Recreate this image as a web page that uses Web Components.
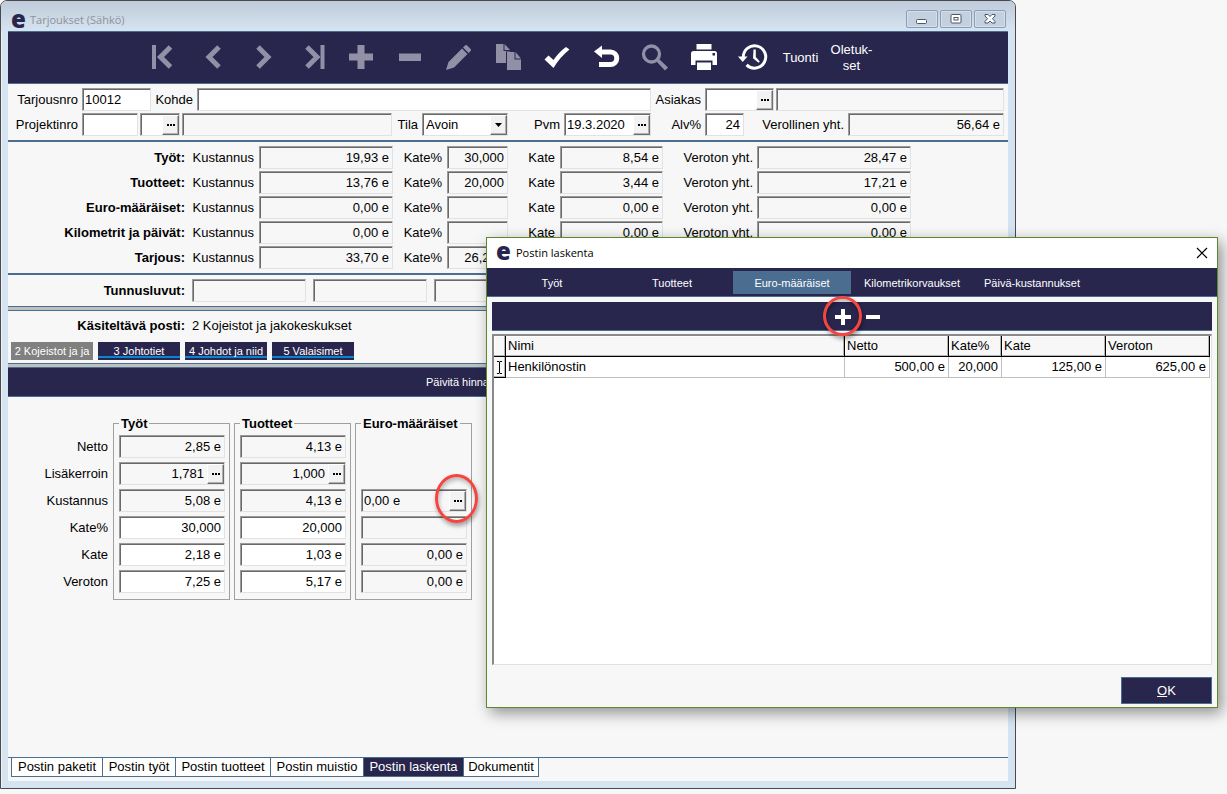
<!DOCTYPE html>
<html lang="fi">
<head>
<meta charset="utf-8">
<meta name="viewport" content="width=device-width, initial-scale=1">
<title>Tarjoukset (Sähkö)</title>
<style>
  :root {
    --navy: #28264d;
    --line: #4a6d90;
    --face: #f7f7f7;
    --frame: #d6e4f2;
  }
  html, body { margin: 0; min-height: 100%; }
  body {
    position: relative;
    background: var(--face);
    color: #000;
    font: 13px/16px "Liberation Sans", Arial, sans-serif;
  }
  offer-window { width: calc(100% - 211px); min-height: calc(100vh - 5px); }
  item-dialog { position: absolute; z-index: 10; left: 486px; right: 9px; top: 237px; }
</style>
</head>
<body>
<offer-window></offer-window>
<item-dialog></item-dialog>

<script>
const RESET = `
  :host, *, *::before, *::after { box-sizing: border-box; }
  button, input, select { font: inherit; color: inherit; margin: 0; border-radius: 0; }
  button { padding: 0; border: 0; background: none; }
  svg { display: block; }
`;

class View extends HTMLElement {
  constructor() {
    super();
    this.attachShadow({ mode: 'open', delegatesFocus: this.constructor.delegates === true });
  }
  connectedCallback() {
    if (!this.shadowRoot.firstChild) {
      this.shadowRoot.innerHTML = `<style>${RESET}${this.css()}</style>${this.html()}`;
    }
  }
  css() { return ''; }
  html() { return '<slot></slot>'; }
  attr(name) { return this.getAttribute(name) || ''; }
}

/* Sunken box, optionally with a caption and a lookup button */
class ValueField extends View {
  static delegates = true;
  static formAssociated = true;
  css() {
    return `
      :host { display: flex; height: 23px; min-width: 0; }
      label { flex: none; width: var(--lw, 0); padding-right: var(--lp, 4px); text-align: right; line-height: 24px; white-space: nowrap; }
      .box {
        flex: 1; min-width: 0; display: flex; background: var(--face);
        border: 1px solid; border-color: #9a9a9a #e2e2e2 #e2e2e2 #9a9a9a;
        box-shadow: inset 1px 1px 0 #696969;
      }
      :host([edit]) .box { background: #fff; }
      input {
        flex: 1; width: 0; min-width: 0; height: 20px; border: 0; background: none; outline: 0;
        padding: 0 3px 0 2px; text-align: right;
      }
      :host([start]) input { text-align: left; }
      button {
        flex: none; width: 17px; margin-top: 1px; background: #f2f2f2;
        border: 1px solid; border-color: #fff #6d6d6d #6d6d6d #fff;
        box-shadow: inset -1px -1px 0 #b0b0b0;
        display: grid; place-items: center;
      }
    `;
  }
  html() {
    const label = this.attr('label');
    const name = label || this.attr('name');
    return `
      ${label ? `<label for="v">${label}</label>` : ''}
      <div class="box">
        <input id="v" type="text" value="${this.attr('value')}" ${label ? '' : `aria-label="${name}"`} ${this.hasAttribute('edit') ? '' : 'readonly'}>
        ${this.hasAttribute('lookup') ? `<button type="button" aria-label="Valitse ${name}">
          <svg width="8" height="2" viewBox="0 0 8 2"><path d="M0 0h2v2H0zM3 0h2v2H3zM6 0h2v2H6z"/></svg></button>` : ''}
      </div>`;
  }
}
customElements.define('value-field', ValueField);

class ChoiceField extends View {
  static delegates = true;
  css() {
    return `
      :host { display: flex; height: 23px; }
      label { flex: none; width: var(--lw, 0); padding-right: 4px; text-align: right; line-height: 24px; }
      .box {
        position: relative; flex: 1; min-width: 0; display: flex; background: #fff;
        border: 1px solid; border-color: #9a9a9a #e2e2e2 #e2e2e2 #9a9a9a;
        box-shadow: inset 1px 1px 0 #696969;
      }
      select { appearance: none; flex: 1; width: 0; border: 0; padding: 0 18px 0 3px; background: none; outline: 0; }
      .arrow {
        position: absolute; right: 0; top: 1px; bottom: 0; width: 17px; background: #f2f2f2; pointer-events: none;
        border: 1px solid; border-color: #fff #6d6d6d #6d6d6d #fff; box-shadow: inset -1px -1px 0 #b0b0b0;
        display: grid; place-items: center;
      }
    `;
  }
  html() {
    return `<label for="s">${this.attr('label')}</label>
      <div class="box"><select id="s"><option>${this.attr('value')}</option></select>
      <span class="arrow"><svg width="7" height="4" viewBox="0 0 7 4"><path d="M0 0h7L3.5 4z"/></svg></span></div>`;
  }
}
customElements.define('choice-field', ChoiceField);

/* Company mark in the title bars */
class AppMark extends View {
  css() {
    return `:host { display: block; width: 14px; font: 800 24px/20px "Open Sans", sans-serif; color: var(--navy); }
      span { display: block; }`;
  }
  html() { return '<span aria-hidden="true">e</span>'; }
}
customElements.define('app-mark', AppMark);

/* Hand-drawn style highlight around a control */
class HighlightRing extends View {
  css() {
    return `:host { display: block; position: absolute; z-index: 1; pointer-events: none; border: 3px solid #f4463f; border-radius: 50%;
      box-shadow: 1px 3px 4px rgba(0,0,0,.35), inset 1px 3px 4px rgba(0,0,0,.25); }`;
  }
}
customElements.define('highlight-ring', HighlightRing);

const ICONS = [
  ['Ensimmäinen', 1, '<path d="M13 13h4v24h-4z"/><path class="s" d="M31.500 15 21.500 25l10 10"/>'],
  ['Edellinen', 1, '<path class="s" d="M31 15 21 25l10 10"/>'],
  ['Seuraava', 1, '<path class="s" d="M21 15l10 10-10 10"/>'],
  ['Viimeinen', 1, '<path d="M34.500 13h4v24h-4z"/><path class="s" d="M21 15l10 10-10 10"/>'],
  ['Lisää', 1, '<path d="M22.500 13h7v8.500H38v7h-8.500V37h-7v-8.500H14v-7h8.500z"/>'],
  ['Poista', 1, '<path d="M15 21.500h22v7.500H15z"/>'],
  ['Muokkaa', 1, '<path d="M13 38l2.500-8L29 16.500l5.500 5.500L21 35.500zM30 15.500l2-2q1-1 2.200 0l3.400 3.400q1 1.100 0 2.100l-2 2z"/>'],
  ['Kopioi', 1, '<path d="M14 12h7.500v7H28v.5h-4V31H14zM22.500 12l5.500 6h-5.500z"/><path d="M25 20h7.500v7.500H39V38H25zM33.500 20l5.500 6.500h-5.500z"/>'],
  ['Hyväksy', 0, '<path d="M13.500 27.500l4-4 5 4.500Q28 20 35 15l3.500 2.500Q29 25 22.500 36z"/>'],
  ['Peru', 0, '<path d="M14 19.500l8-6v4h8.500a8.500 8.500 0 0 1 0 17.500H19v-5h11.500a3.700 3.700 0 0 0 0-7.500H22V26z"/>'],
  ['Hae', 1, '<circle cx="22.500" cy="22" r="8" fill="none" stroke="currentColor" stroke-width="3.300"/><path d="M27.500 29.500l2.500-2.500 9 8.500-3 3z"/>'],
  ['Tulosta', 0, '<path d="M18.500 12h15v5.500h-15z"/><path fill-rule="evenodd" d="M15.500 19h21q2.500 0 2.500 2.500V33h-4.500v-4.500h-17V33H13V21.500Q13 19 15.500 19zm19 2v2.500H37V21z"/><path d="M19 30.500h14V38H19z"/>'],
  ['Historia', 0, '<path d="M16.300 25a11.200 11.200 0 1 1 3.300 7.900" fill="none" stroke="currentColor" stroke-width="3"/><path d="M11 24.500h9.500L15.700 30z"/><path d="M26.500 17.500h2.300v7.500l4 4.500-1.300 1.200-5.500-4.500z"/>'],
];

class MainToolbar extends View {
  css() {
    return `
      :host { display: flex; height: 53px; padding-left: 131px; background: var(--navy); color: #fff;
        border: solid var(--line); border-width: 1px 0; }
      button { width: 49px; height: 51px; }
      button.dim { color: #9190a6; }
      svg { fill: currentColor; }
      .s { fill: none; stroke: currentColor; stroke-width: 5; }
      .two { padding-left: 4px; }
    `;
  }
  html() {
    return ICONS.map(([name, dim, art]) =>
      `<button type="button" class="${dim ? 'dim' : ''}" aria-label="${name}"><svg width="49" height="51" viewBox="0 0 49 51">${art}</svg></button>`
    ).join('') + '<button type="button">Tuonti</button><button type="button" class="two">Oletuk-<br>set</button>';
  }
}
customElements.define('main-toolbar', MainToolbar);

class OfferHeader extends View {
  css() {
    return `
      :host { display: flex; flex-direction: column; gap: 2px; padding: 4px 4px 4px 0; border-bottom: 2px solid var(--line); }
      .row { display: flex; }
      .gap { margin-left: 2px; }
      .grow { flex: 1; }
      .no { --lw: 74px; width: 143px; }
      .project { --lw: 74px; width: 130px; }
      .target { --lw: 46px; }
      .client { --lw: 54px; width: 123px; }
      .clientname { width: 228px; }
      .code { width: 40px; }
      .state { --lw: 30px; width: 116px; }
      .date { --lw: 56px; width: 143px; }
      .vat { --lw: 54px; width: 93px; }
      .total { --lw: 104px; width: 260px; }
    `;
  }
  html() {
    return `
      <div class="row">
        <value-field class="no" label="Tarjousnro" value="10012" edit start></value-field>
        <value-field class="target grow" label="Kohde" edit start></value-field>
        <value-field class="client" label="Asiakas" edit start lookup></value-field>
        <value-field class="clientname gap" name="Asiakkaan nimi" start></value-field>
      </div>
      <div class="row">
        <value-field class="project" label="Projektinro" edit start></value-field>
        <value-field class="code gap" name="Projekti" edit start lookup></value-field>
        <value-field class="grow gap" name="Projektin nimi" start></value-field>
        <choice-field class="state" label="Tila" value="Avoin"></choice-field>
        <value-field class="date" label="Pvm" value="19.3.2020" edit start lookup></value-field>
        <value-field class="vat" label="Alv%" value="24" edit></value-field>
        <value-field class="total" label="Verollinen yht." value="56,64 e"></value-field>
      </div>`;
  }
}
customElements.define('offer-header', OfferHeader);

class OfferTotals extends View {
  css() {
    return `
      :host { --lp: 5px; display: flex; flex-direction: column; gap: 2px; padding: 4px 0; border-bottom: 2px solid var(--line); }
      .row { display: flex; height: 23px; }
      b { width: 177px; text-align: right; line-height: 24px; }
      .cost { --lw: 74px; width: 208px; }
      .pct { --lw: 54px; width: 115px; }
      .margin { --lw: 52px; width: 155px; }
      .net { --lw: 94px; --lp: 4px; width: 248px; }
    `;
  }
  html() {
    return [
      ['Työt:', '19,93 e', '30,000', '8,54 e', '28,47 e'],
      ['Tuotteet:', '13,76 e', '20,000', '3,44 e', '17,21 e'],
      ['Euro-määräiset:', '0,00 e', '', '0,00 e', '0,00 e'],
      ['Kilometrit ja päivät:', '0,00 e', '', '0,00 e', '0,00 e'],
      ['Tarjous:', '33,70 e', '26,233'],
    ].map(([t, a, b, c, d]) => `
      <div class="row" role="group" aria-label="${t}"><b>${t}</b>
        <value-field class="cost" label="Kustannus" value="${a}"></value-field>
        <value-field class="pct" label="Kate%" value="${b}"></value-field>
        ${c ? `<value-field class="margin" label="Kate" value="${c}"></value-field>
        <value-field class="net" label="Veroton yht." value="${d}"></value-field>` : ''}
      </div>`).join('');
  }
}
customElements.define('offer-totals', OfferTotals);

class KeyFigures extends View {
  css() {
    return `
      :host { display: flex; gap: 7px; padding: 4px 0; height: 31px; }
      b { width: 177px; text-align: right; line-height: 24px; }
      value-field { width: 114px; }
    `;
  }
  html() {
    return '<b>Tunnusluvut:</b>' + [1, 2, 3].map(n => `<value-field name="Tunnusluku ${n}"></value-field>`).join('');
  }
}
customElements.define('key-figures', KeyFigures);

class PanelSplitter extends View {
  css() {
    return ':host { display: block; height: 5px; background: #c0c0c0; border: solid var(--line); border-width: 1px 0; }';
  }
}
customElements.define('panel-splitter', PanelSplitter);

class PostPicker extends View {
  css() {
    return `
      :host { display: block; padding: 7px 3px 3px; }
      p { display: flex; gap: 7px; margin: 0 0 8px; }
      b { width: 174px; text-align: right; }
      div { display: flex; gap: 5px; }
      button { width: 82px; height: 18px; color: #fff; background: var(--navy); font-size: 11px; line-height: 18px; white-space: nowrap;
        background-image: linear-gradient(#0a84d0, #0a84d0); background-size: 100% 2px; background-position: 0 14px; background-repeat: no-repeat; }
      .on { background: #808080; }
    `;
  }
  html() {
    return `<p><b>Käsiteltävä posti:</b><span>2 Kojeistot ja jakokeskukset</span></p>
      <div><button type="button" class="on">2 Kojeistot ja ja</button><button type="button">3 Johtotiet</button><button type="button">4 Johdot ja niid</button><button type="button">5 Valaisimet</button></div>`;
  }
}
customElements.define('post-picker', PostPicker);

class ActionBar extends View {
  css() {
    return `
      :host { display: flex; height: 29px; padding-left: 418px; background: var(--navy); border-bottom: 1px solid var(--line); }
      button { color: #fff; font-size: 11px; }
    `;
  }
  html() { return '<button type="button">Päivitä hinnat</button>'; }
}
customElements.define('action-bar', ActionBar);

class PostCalculation extends View {
  css() {
    return `
      :host { display: flex; flex: 1; align-items: flex-start; gap: 4px; padding-top: 19px; }
      .labels { width: 101px; padding: 19px 1px 0 0; display: grid; gap: 4px; text-align: right; }
      .labels label { height: 23px; line-height: 24px; }
      fieldset { width: 117px; min-width: 0; margin: 0; padding: 4px 4px 6px 5px; border: 1px solid #a0a0a0; }
      legend { padding: 0 2px; line-height: 15px; font-weight: bold; white-space: nowrap; }
      .cells { display: grid; gap: 4px; }
      .cell { position: relative; height: 23px; }
      highlight-ring { width: 43px; height: 49px; right: -11px; top: -15px; }
    `;
  }
  html() {
    const rows = ['Netto', 'Lisäkerroin', 'Kustannus', 'Kate%', 'Kate', 'Veroton'];
    const groups = [
      ['Työt', ['2,85 e', '1,781', '5,08 e', '30,000', '2,18 e', '7,25 e'], ['', 'lookup', '', 'edit', 'edit', 'edit']],
      ['Tuotteet', ['4,13 e', '1,000', '4,13 e', '20,000', '1,03 e', '5,17 e'], ['', 'lookup', '', 'edit', 'edit', 'edit']],
      ['Euro-määräiset', [null, null, '0,00 e', '', '0,00 e', '0,00 e'], ['', '', 'lookup start', '', '', '']],
    ];
    return `<div class="labels">${rows.map((r, i) => `<label for="c0${i}">${r}</label>`).join('')}</div>` +
      groups.map(([title, values, flags], g) => `<fieldset><legend>${title}</legend><div class="cells">${
        values.map((v, i) => `<div class="cell">${v === null ? '' : `<value-field id="c${g}${i}" name="${title} ${rows[i]}" value="${v}" ${flags[i]}></value-field>`}${
          g === 2 && i === 2 ? '<highlight-ring></highlight-ring>' : ''}</div>`).join('')
      }</div></fieldset>`).join('');
  }
}
customElements.define('post-calculation', PostCalculation);

class PageTabs extends View {
  css() {
    return `
      :host { display: flex; height: 24px; padding: 0 3px 4px; border-top: 1px solid var(--line); }
      button { height: 19px; width: var(--w); background: #fff; border: solid var(--line); border-width: 0 0 1px 1px; white-space: nowrap; }
      button:last-child { border-right-width: 1px; }
      .on { background: var(--navy); color: #fff; }
    `;
  }
  html() {
    return [['Postin paketit', 91], ['Postin työt', 73], ['Postin tuotteet', 95], ['Postin muistio', 93], ['Postin laskenta', 100], ['Dokumentit', 76]]
      .map(([t, w]) => `<button type="button" style="--w:${w}px" class="${t === 'Postin laskenta' ? 'on' : ''}">${t}</button>`).join('');
  }
}
customElements.define('page-tabs', PageTabs);

class OfferWindow extends View {
  css() {
    return `
      :host { display: flex; flex-direction: column; border: 1px solid #4a4a4c; border-radius: 7px 7px 0 0; background: var(--frame);
        box-shadow: inset 1px 1px 0 #eef4fa; }
      header { display: flex; align-items: center; height: 30px; padding: 5px 9px 0 10px; gap: 5px; border-radius: 6px 6px 0 0;
        background: linear-gradient(#bfcbda, #d6e3f0); color: #8d9299; }
      h1 { flex: 1; margin: 0; padding-top: 2px; font: 11px/16px "Open Sans", sans-serif; }
      .ctl { display: flex; gap: 2px; }
      .ctl button { width: 32px; height: 18px; border: 1px solid #8d9cb4; border-radius: 2px; box-shadow: inset 0 0 0 1px #d5e0ec; background: #c3d0df; display: grid; place-items: center; }
      main { flex: 1; display: flex; flex-direction: column; margin: 0 7px 7px; background: var(--face); }
      svg { fill: #fff; stroke: #4d5666; }
    `;
  }
  html() {
    return `
      <header><app-mark></app-mark><h1>Tarjoukset (Sähkö)</h1>
        <div class="ctl">
          <button type="button" aria-label="Pienennä"><svg width="12" height="10" viewBox="0 0 12 10"><rect x=".5" y="5.500" width="10" height="4" rx="1"/></svg></button>
          <button type="button" aria-label="Suurenna"><svg width="12" height="10" viewBox="0 0 12 10"><rect x="1" y=".5" width="10" height="8.500" rx="1"/><rect x="4" y="3.500" width="4" height="2.500"/></svg></button>
          <button type="button" aria-label="Sulje"><svg width="12" height="10" viewBox="0 0 12 10"><path d="M1 .5h3l2 2 2-2h3v1.500L8.500 4.700 11 7.500V9H8L6 7 4 9H1V7.500l2.500-2.800L1 2z"/></svg></button>
        </div>
      </header>
      <main>
        <main-toolbar></main-toolbar>
        <offer-header></offer-header>
        <offer-totals></offer-totals>
        <key-figures></key-figures>
        <panel-splitter></panel-splitter>
        <post-picker></post-picker>
        <panel-splitter></panel-splitter>
        <action-bar></action-bar>
        <post-calculation></post-calculation>
        <page-tabs></page-tabs>
      </main>`;
  }
}
customElements.define('offer-window', OfferWindow);

class ItemTable extends View {
  css() {
    return `
      :host { display: block; height: 331px; background: #fff; border: solid; border-width: 2px 1px 1px 2px; border-color: #8a8a8a #e2e2e2 #e2e2e2 #8a8a8a; padding-right: 1px; }
      table { width: 100%; table-layout: fixed; border-collapse: separate; border-spacing: 0; }
      th, td { height: 21px; padding: 0 3px 0 2px; font-weight: normal; text-align: left; line-height: 20px; white-space: nowrap; }
      th { background: var(--face); border: solid #000; border-width: 0 1px 1px 0; box-shadow: inset -1px -1px 0 #b5b5b5, inset 1px 1px 0 #fff; }
      td { border: solid #c0c0c0; border-width: 0 1px 1px 0; }
      td.n { text-align: right; }
      td.mark { padding: 0; background: var(--face); border-color: #000; box-shadow: inset -1px -1px 0 #b5b5b5; }
      td svg { margin: 0 2px; fill: none; stroke: #000; stroke-width: 1; }
      col.mark { width: 12px; } col.wide { width: 104px; } col.slim { width: 53px; }
    `;
  }
  html() {
    return `<table>
      <colgroup><col class="mark"><col><col class="wide"><col class="slim"><col class="wide"><col class="wide"></colgroup>
      <thead><tr><th aria-label="Valinta"></th><th>Nimi</th><th>Netto</th><th>Kate%</th><th>Kate</th><th>Veroton</th></tr></thead>
      <tbody><tr><td class="mark"><svg width="7" height="13" viewBox="0 0 7 13"><path d="M1 .5h2l.5.5.5-.5h2M3.500 1v11M1 12.500h2l.5-.5.5.5h2"/></svg></td>
        <td>Henkilönostin</td><td class="n">500,00 e</td><td class="n">20,000</td><td class="n">125,00 e</td><td class="n">625,00 e</td></tr></tbody>
    </table>`;
  }
}
customElements.define('item-table', ItemTable);

class ItemDialog extends View {
  css() {
    return `
      :host { display: block; background: var(--face); border: 1px solid #5a8a2c; box-shadow: 4px 5px 14px rgba(0,0,0,.42); }
      header { display: flex; align-items: center; gap: 6px; height: 30px; padding: 0 9px; background: #fff; }
      app-mark { margin-top: -4px; }
      h2 { flex: 1; margin: 0; font: 11px/16px "Open Sans", sans-serif; }
      nav { display: flex; gap: 2px; height: 29px; padding: 3px 6px; background: var(--navy); border-bottom: 1px solid var(--line); }
      nav button { width: 118px; height: 23px; color: #fff; font-size: 11px; }
      nav .on { background: var(--line); }
      .body { padding: 5px 5px 3px; }
      .tools { display: flex; justify-content: center; gap: 10px; height: 29px; margin-bottom: 3px; padding-left: 11px; background: var(--navy); border-bottom: 1px solid var(--line); }
      .tools button { position: relative; width: 20px; padding-top: 2px; display: grid; place-items: center; }
      .tools svg { fill: #fff; }
      highlight-ring { width: 39px; height: 40px; left: -10px; top: -6px; }
      footer { display: flex; justify-content: flex-end; padding-top: 12px; }
      footer button { width: 91px; height: 27px; color: #fff; background: var(--navy); border: 1px solid var(--line); }
    `;
  }
  html() {
    return `
      <header><app-mark></app-mark><h2>Postin laskenta</h2>
        <button type="button" aria-label="Sulje"><svg width="12" height="12" viewBox="0 0 12 12"><path d="M1 1l10 10M11 1L1 11" stroke="#000" stroke-width="1.200"/></svg></button></header>
      <nav>
        <button type="button">Työt</button><button type="button">Tuotteet</button><button type="button" class="on">Euro-määräiset</button><button type="button">Kilometrikorvaukset</button><button type="button">Päivä-kustannukset</button>
      </nav>
      <div class="body">
        <div class="tools">
          <button type="button" aria-label="Lisää rivi"><svg width="16" height="16" viewBox="0 0 16 16"><path d="M6 0h4v6h6v4h-6v6H6v-6H0V6h6z"/></svg><highlight-ring></highlight-ring></button>
          <button type="button" aria-label="Poista rivi"><svg width="14" height="16" viewBox="0 0 14 16"><path d="M0 6h14v4H0z"/></svg></button>
        </div>
        <item-table></item-table>
        <footer><button type="button"><u>O</u>K</button></footer>
      </div>`;
  }
}
customElements.define('item-dialog', ItemDialog);
</script>
</body>
</html>
